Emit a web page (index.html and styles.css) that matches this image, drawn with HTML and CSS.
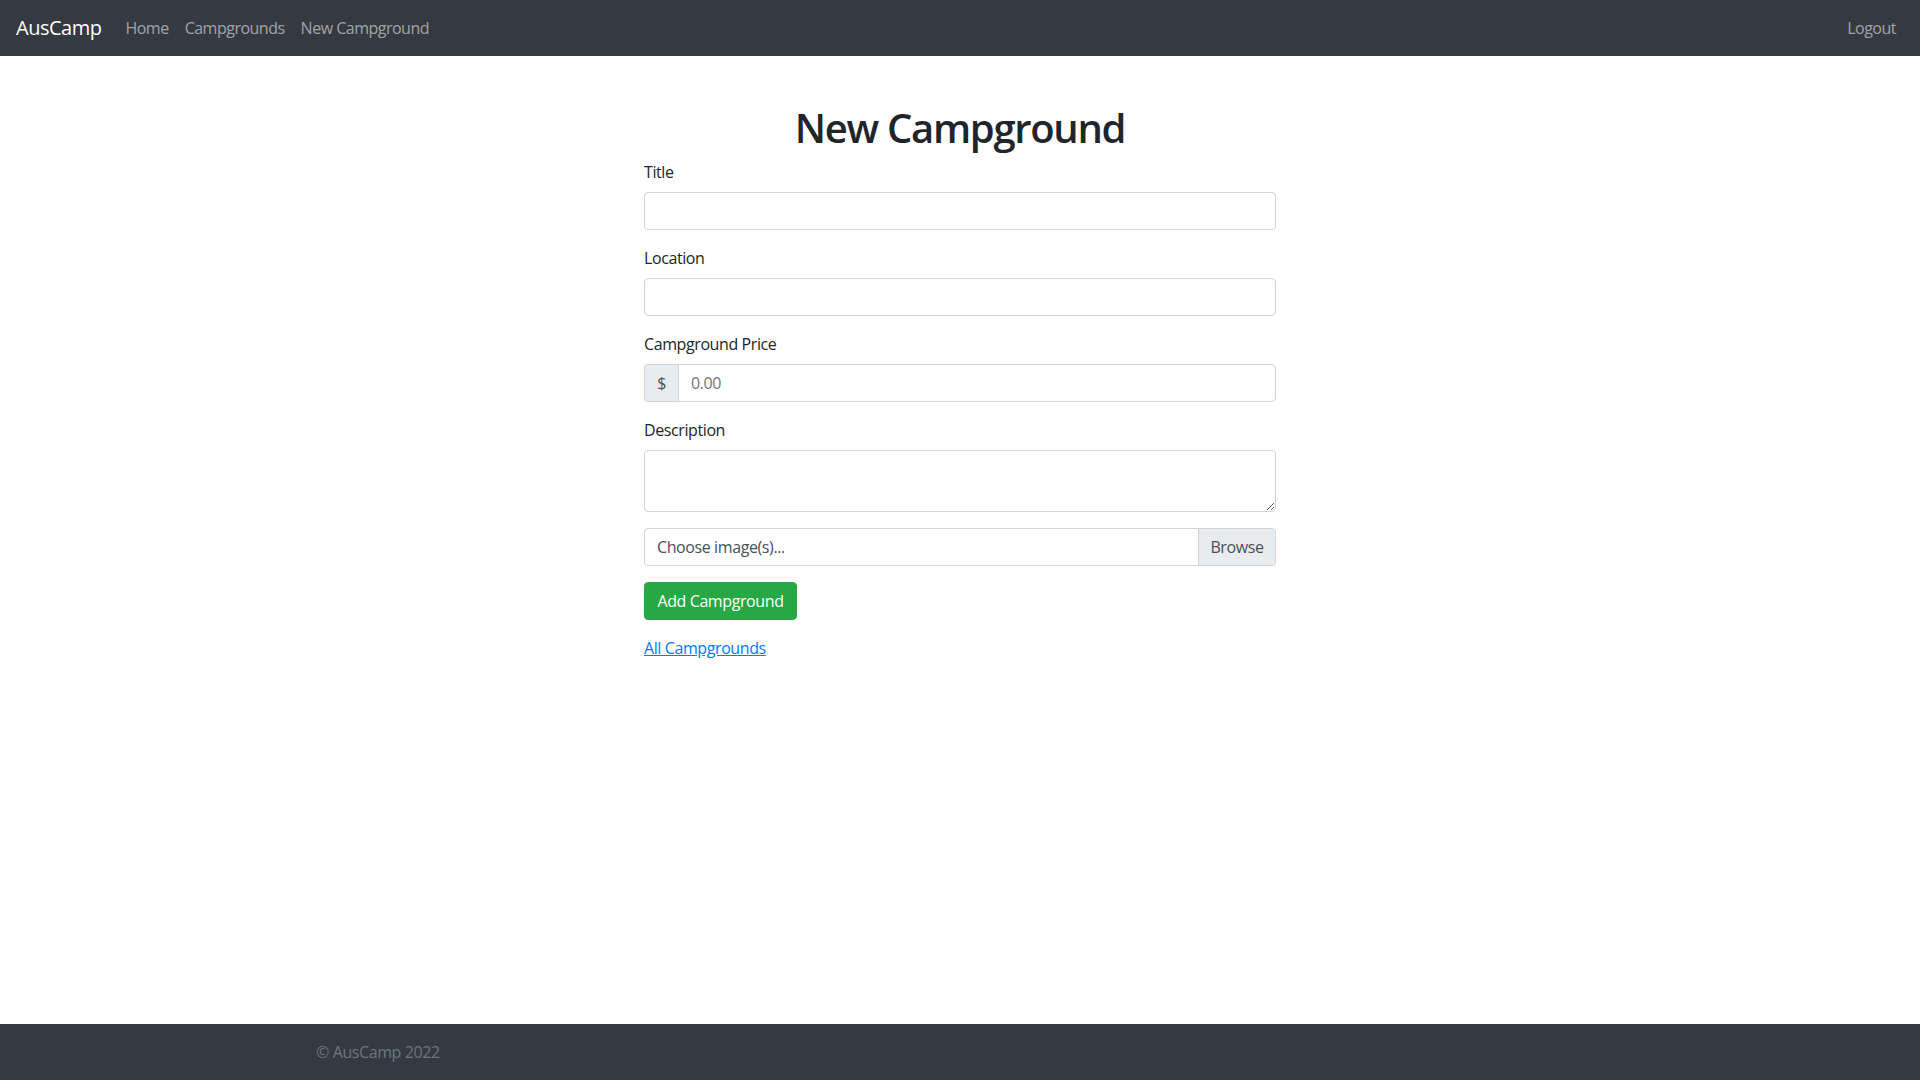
FILE: index.html
```html
<!DOCTYPE html>
<html lang="en">
<head>
<meta charset="utf-8">
<title>New Campground</title>
<link rel="stylesheet" href="styles.css">
</head>
<body class="page">
<nav class="navbar">
  <div class="nav-inner">
    <a class="brand" href="#">AusCamp</a>
    <div class="nav-links">
      <a class="nav-link" href="#">Home</a>
      <a class="nav-link" href="#">Campgrounds</a>
      <a class="nav-link" href="#">New Campground</a>
    </div>
    <div class="nav-right">
      <a class="nav-link" href="#">Logout</a>
    </div>
  </div>
</nav>
<main class="main">
  <div class="form-col">
    <h1 class="title">New Campground</h1>
    <form class="form">
      <div class="group">
        <label class="label" for="title">Title</label>
        <input class="control" type="text" id="title">
      </div>
      <div class="group">
        <label class="label" for="location">Location</label>
        <input class="control" type="text" id="location">
      </div>
      <div class="group">
        <label class="label" for="price">Campground Price</label>
        <div class="input-group">
          <span class="addon">$</span>
          <input class="control joined" type="text" id="price" placeholder="0.00">
        </div>
      </div>
      <div class="group">
        <label class="label" for="description">Description</label>
        <textarea class="control area" id="description" rows="2"></textarea>
      </div>
      <div class="group">
        <div class="file">
          <span class="file-text">Choose image(s)...</span>
          <span class="file-btn">Browse</span>
        </div>
      </div>
      <div class="group">
        <button class="btn-success" type="button">Add Campground</button>
      </div>
    </form>
    <a class="back-link" href="#">All Campgrounds</a>
  </div>
</main>
<footer class="footer">
  <div class="footer-inner">
    <span class="muted">&copy; AusCamp 2022</span>
  </div>
</footer>
</body>
</html>
```
FILE: styles.css
```css
* { box-sizing: border-box; }
html, body { margin: 0; padding: 0; }
.page {
  font-family: "Open Sans", "Noto Sans", sans-serif;
  font-size: 16px;
  line-height: 1.5;
  color: #212529;
  background: #fff;
  min-height: 100vh;
  display: flex;
  flex-direction: column;
  letter-spacing: -0.4px;
}
a { text-decoration: none; }

.navbar {
  background: #343a40;
  padding: 8px 16px;
}
.nav-inner {
  display: flex;
  align-items: center;
}
.brand {
  color: #fff;
  font-size: 20px;
  line-height: 30px;
  padding: 5px 0;
  margin-right: 16px;
  letter-spacing: -0.5px;
}
.nav-links { display: flex; }
.nav-right { margin-left: auto; display: flex; }
.nav-link {
  color: rgba(255,255,255,0.55);
  padding: 8px 8px;
  line-height: 24px;
  letter-spacing: -0.5px;
}

.main {
  flex: 1 0 auto;
  display: flex;
  justify-content: center;
  padding-top: 48px;
}
.form-col { width: 632px; }
.title {
  font-size: 40px;
  font-weight: 600;
  line-height: 48px;
  margin: 0 0 8px;
  text-align: center;
  letter-spacing: -1.3px;
}
.form { margin: 0; }
.group { margin-bottom: 16px; }
.label {
  display: inline-block;
  margin-bottom: 8px;
  line-height: 24px;
}
.control {
  display: block;
  width: 100%;
  height: 38px;
  padding: 6px 12px;
  font: inherit;
  letter-spacing: inherit;
  color: #495057;
  background: #fff;
  border: 1px solid #ced4da;
  border-radius: 4px;
  outline: none;
}
.control::placeholder { color: #6c757d; opacity: 1; }
.area { height: 62px; resize: vertical; }
.input-group { display: flex; }
.addon {
  width: 34px;
  height: 38px;
  display: flex;
  align-items: center;
  justify-content: center;
  background: #e9ecef;
  border: 1px solid #ced4da;
  border-right: none;
  border-radius: 4px 0 0 4px;
  color: #495057;
}
.joined { border-radius: 0 4px 4px 0; flex: 1; }
.file {
  display: flex;
  height: 38px;
  border: 1px solid #ced4da;
  border-radius: 4px;
  overflow: hidden;
  color: #495057;
}
.file-text {
  flex: 1;
  padding: 6px 12px;
  line-height: 24px;
}
.file-btn {
  width: 77px;
  text-align: center;
  background: #e9ecef;
  border-left: 1px solid #ced4da;
  padding: 6px 0;
  line-height: 24px;
}
.btn-success {
  font: inherit;
  letter-spacing: inherit;
  width: 153px;
  color: #fff;
  background: #28a745;
  border: 1px solid #28a745;
  border-radius: 4px;
  padding: 6px 0;
  height: 38px;
  line-height: 24px;
  cursor: pointer;
}
.back-link {
  color: #007bff;
  text-decoration: underline;
  line-height: 24px;
}

.footer {
  background: #343a40;
  padding: 16px 0;
}
.footer-inner {
  max-width: 1320px;
  margin: 0 auto;
  padding: 0 12px 0 16px;
  line-height: 24px;
}
.muted { color: #6c757d; }
```
